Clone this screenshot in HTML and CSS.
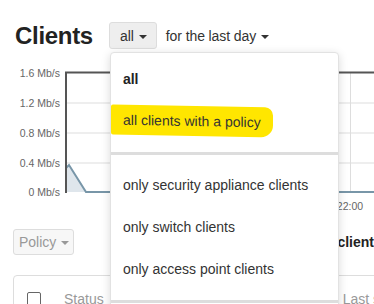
FILE: index.html
```html
<!DOCTYPE html>
<html lang="en">
<head>
  <meta charset="UTF-8" />
  <title>Clients</title>
  <link rel="stylesheet" href="styles.css">
</head>
<body>
  <div class="page">

    <div class="header">
      <h1>Clients</h1>
      <div class="filter">
        <button class="btn-select">all <span class="caret"></span></button>

        <div class="menu">
          <div class="menu-item bold">all</div>
          <div class="menu-item"><span class="marker">all clients with a policy</span></div>
          <div class="divider"></div>
          <div class="menu-item">only security appliance clients</div>
          <div class="menu-item">only switch clients</div>
          <div class="menu-item">only access point clients</div>
          <div class="divider"></div>
          <div class="menu-item">only wireless clients</div>
        </div>
      </div>
      <span class="period">for the last day <span class="caret"></span></span>
    </div>

    <div class="chart">
      <svg width="400" height="156" viewBox="0 60 400 156">
        <g class="labels">
          <text x="60" y="77">1.6 Mb/s</text>
          <text x="60" y="107">1.2 Mb/s</text>
          <text x="60" y="137">0.8 Mb/s</text>
          <text x="60" y="167">0.4 Mb/s</text>
          <text x="60" y="196">0 Mb/s</text>
          <text class="tick" x="350" y="210">22:00</text>
        </g>
        <g class="grid">
          <line x1="65" y1="103" x2="400" y2="103" />
          <line x1="65" y1="133" x2="400" y2="133" />
          <line x1="65" y1="163" x2="400" y2="163" />
          <line x1="350.5" y1="72" x2="350.5" y2="193" />
        </g>
        <polygon class="area" points="66,192 66,168 69,165 86,192 400,192" />
        <polyline class="series" points="66,168 69,165 86,192 400,192" />
        <path class="axis" d="M66 193 V72.5 H400" />
      </svg>
    </div>

    <div class="toolbar">
      <button class="btn-policy">Policy <span class="caret"></span></button>
      <span class="count">client</span>
    </div>

    <div class="table">
      <div class="table-head">
        <span class="checkbox"></span>
        <span class="col-status">Status</span>
        <span class="col-last">Last seen</span>
      </div>
    </div>

  </div>
</body>
</html>
```

FILE: styles.css
```css
body {
  margin: 0;
  padding: 0;
  font-family: 'Liberation Sans', Arial, sans-serif;
  color: #333;
  background: #fff;
  overflow: hidden;
}

.page {
  width: 420px;
  position: relative;
}

.header {
  display: flex;
  align-items: center;
  padding: 22px 0 0 15px;
  height: 27px;
}

h1 {
  margin: 0 16px 0 0;
  font-size: 24px;
  font-weight: bold;
  color: #222;
  letter-spacing: -0.3px;
}

.filter {
  position: relative;
}

.btn-select {
  height: 27px;
  padding: 0 9px 0 10px;
  font-family: inherit;
  font-size: 14px;
  color: #333;
  background: #eee;
  border: 1px solid #ddd;
  border-radius: 3px;
}

.caret {
  display: inline-block;
  width: 0;
  height: 0;
  margin-left: 1px;
  vertical-align: middle;
  border-top: 4px solid #333;
  border-left: 4px solid transparent;
  border-right: 4px solid transparent;
}

.period {
  margin-left: 9px;
  font-size: 14px;
  color: #333;
  letter-spacing: -0.1px;
}

.menu {
  position: absolute;
  top: 30px;
  left: 1px;
  width: 227px;
  padding-top: 5px;
  background: #fff;
  border: 1px solid #e2e2e2;
  border-radius: 4px;
  box-shadow: 0 2px 10px rgba(0, 0, 0, 0.15);
  z-index: 10;
}

.menu-item {
  height: 42px;
  line-height: 42px;
  padding-left: 12px;
  font-size: 14px;
  color: #333;
  white-space: nowrap;
}

.menu-item.bold {
  font-weight: bold;
  color: #222;
}

.marker {
  display: inline-block;
  margin-left: -12px;
  padding: 0 12px 0 12px;
  line-height: 30px;
  background: #ffe600;
  border-radius: 2px 8px 12px 2px;
  transform: skewY(1deg);
}

.divider {
  height: 3px;
  margin: 10px 0 9px;
  background: #ddd;
}

.chart {
  margin-top: 11px;
  height: 156px;
}

.chart svg {
  display: block;
}

.labels text {
  font-size: 10.5px;
  fill: #666;
  text-anchor: end;
}

.labels .tick {
  text-anchor: middle;
}

.grid line {
  stroke: #ddd;
  stroke-width: 1;
}

.area {
  fill: #dfe6ec;
}

.series {
  fill: none;
  stroke: #7896a8;
  stroke-width: 2;
}

.axis {
  fill: none;
  stroke: #555;
  stroke-width: 2;
}

.toolbar {
  display: flex;
  align-items: center;
  width: 374px;
  padding: 13px 0 0 13px;
  box-sizing: border-box;
}

.btn-policy {
  height: 26px;
  padding: 0 4px 0 5px;
  font-family: inherit;
  font-size: 14px;
  color: #999;
  background: #f7f7f7;
  border: 1px solid #ddd;
  border-radius: 3px;
}

.btn-policy .caret {
  border-top-color: #999;
}

.count {
  margin-left: auto;
  font-size: 14px;
  font-weight: bold;
  color: #222;
  white-space: nowrap;
}

.table {
  margin: 20px 0 0 13px;
  border: 1px solid #ddd;
  border-radius: 4px;
  height: 60px;
}

.table-head {
  display: flex;
  align-items: center;
  padding: 15px 0 0 13px;
  font-size: 14px;
  color: #999;
}

.checkbox {
  width: 12px;
  height: 12px;
  border: 1px solid #666;
  border-radius: 2px;
}

.col-status {
  margin-left: 23px;
}

.col-last {
  margin-left: 239px;
  white-space: nowrap;
}
```
